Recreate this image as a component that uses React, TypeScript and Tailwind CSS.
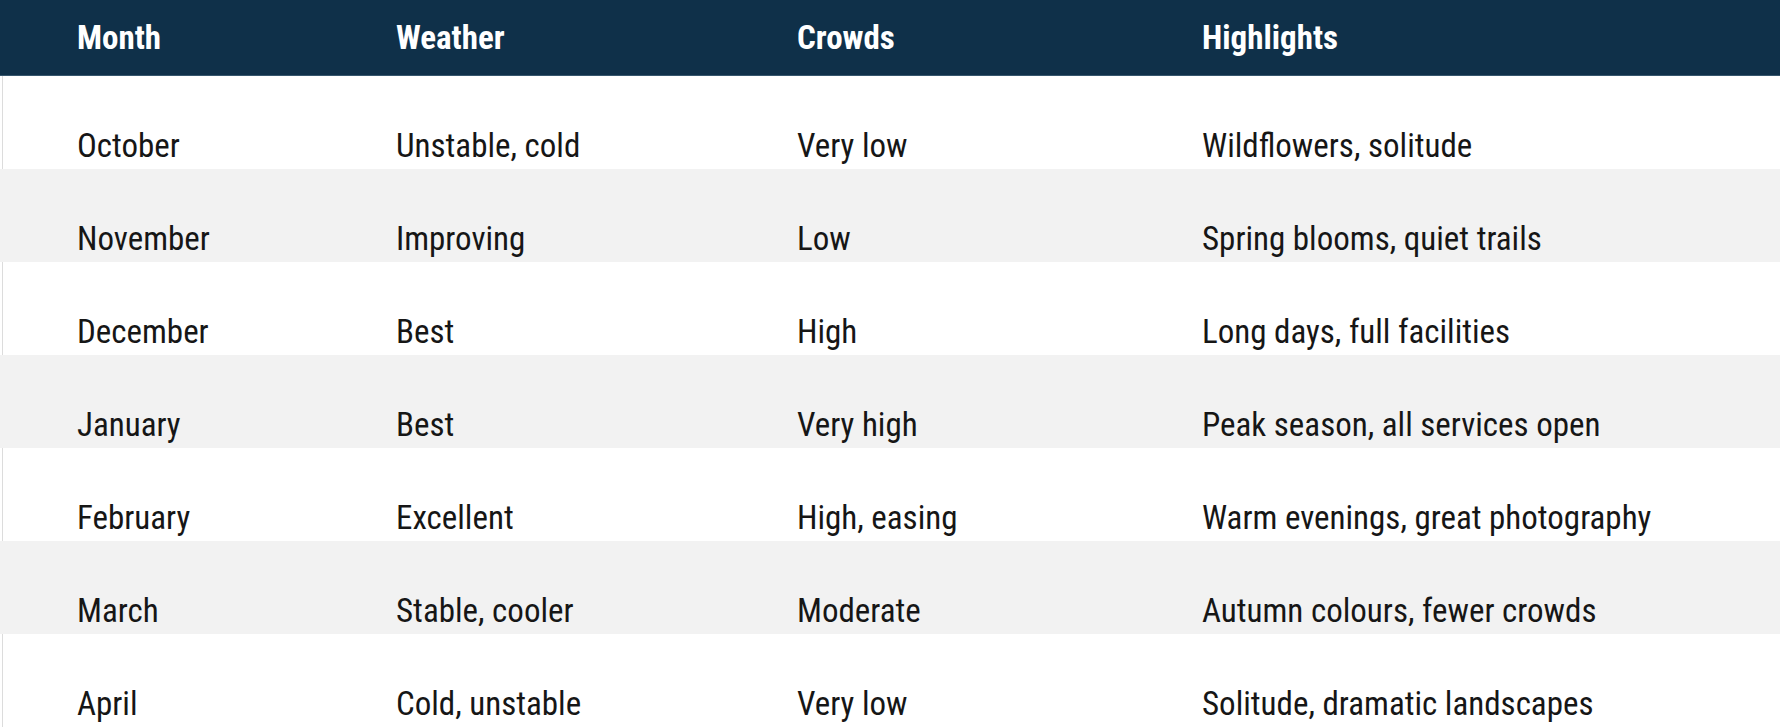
const ROWS = [
  ["October", "Unstable, cold", "Very low", "Wildflowers, solitude"],
  ["November", "Improving", "Low", "Spring blooms, quiet trails"],
  ["December", "Best", "High", "Long days, full facilities"],
  ["January", "Best", "Very high", "Peak season, all services open"],
  ["February", "Excellent", "High, easing", "Warm evenings, great photography"],
  ["March", "Stable, cooler", "Moderate", "Autumn colours, fewer crowds"],
  ["April", "Cold, unstable", "Very low", "Solitude, dramatic landscapes"],
];

const HEADERS = ["Month", "Weather", "Crowds", "Highlights"];

export default function App() {
  return (
    <div className="w-full h-[727px] overflow-hidden bg-white font-['Roboto',sans-serif] font-stretch-condensed text-[33px] leading-none">
      <div className="grid h-[76px] grid-cols-[319px_401px_405px_1fr] items-center border-b border-[#36566d] bg-[#0f3049] pl-[77px] font-bold text-white">
        {HEADERS.map((h) => (
          <div key={h}>{h}</div>
        ))}
      </div>
      {ROWS.map((row, i) => (
        <div
          key={row[0]}
          className={
            i % 2 === 0
              ? "grid h-[93px] grid-cols-[319px_401px_405px_1fr] items-end bg-white pb-[7px] pl-[77px] text-[#161616] shadow-[inset_2px_0_0_#ffffff,inset_3px_0_0_#dcdcdc]"
              : "grid h-[93px] grid-cols-[319px_401px_405px_1fr] items-end bg-[#f2f2f2] pb-[7px] pl-[77px] text-[#161616]"
          }
        >
          {row.map((cell, j) => (
            <div key={j}>{cell}</div>
          ))}
        </div>
      ))}
    </div>
  );
}
